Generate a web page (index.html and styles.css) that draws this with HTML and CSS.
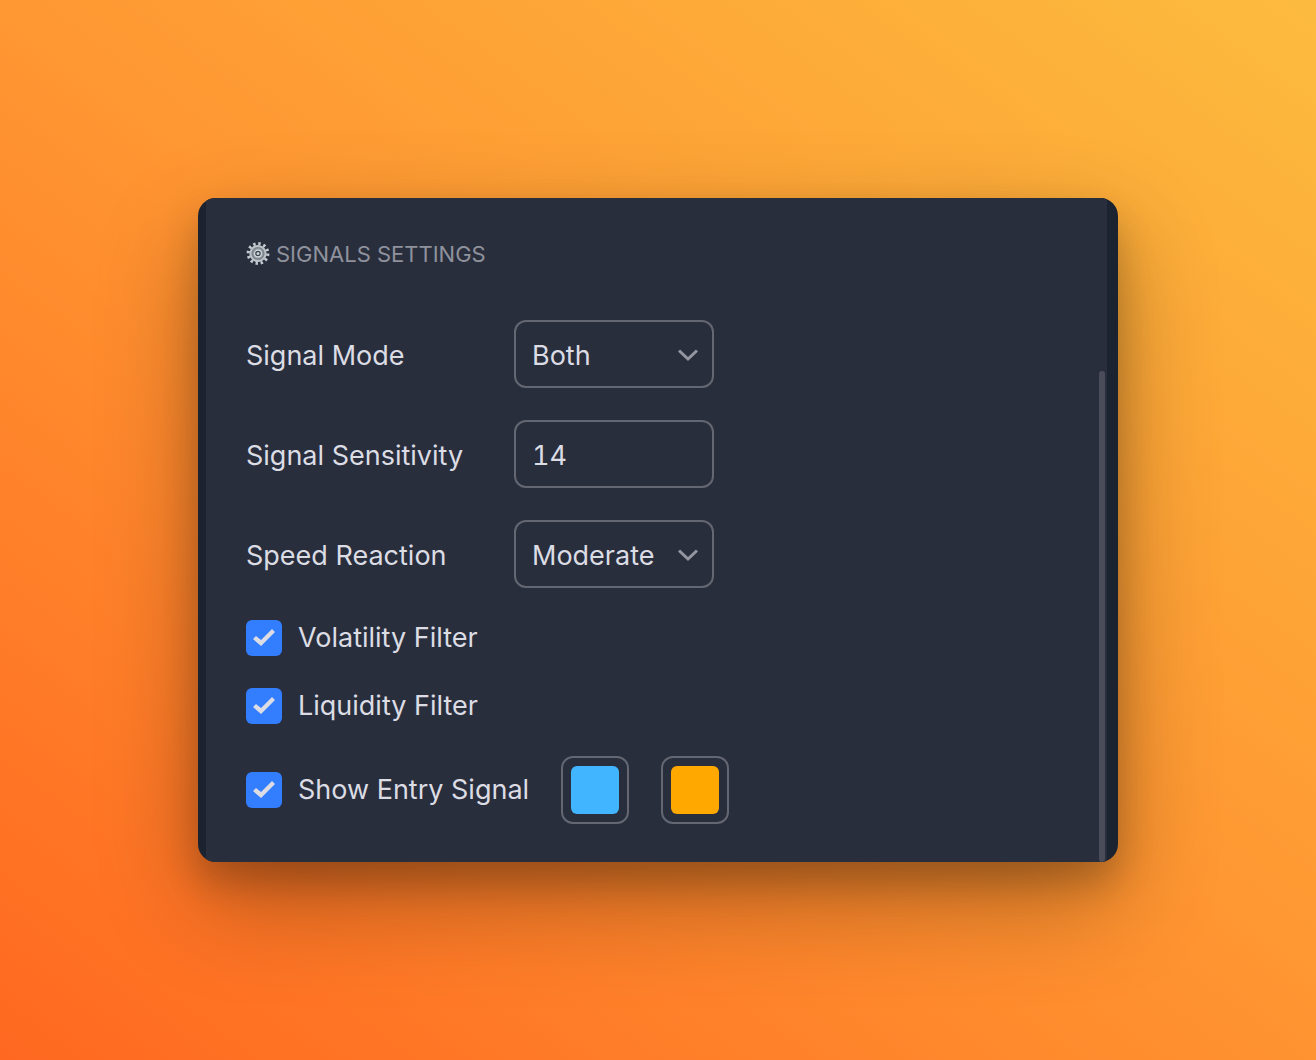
FILE: index.html
```html
<!DOCTYPE html>
<html lang="en">
    <head>
        <meta charset="utf-8">
        <title>Signals Settings</title>
        <link rel="stylesheet" href="styles.css">
    </head>
    <body>
        <div class="window">
            <form class="settings">
                <h1 class="heading">
                    <svg class="gear" viewBox="0 0 24 24" aria-hidden="true">
                        <circle cx="12" cy="11.5" r="9.8" fill="none" stroke="#c3cbd0" stroke-width="3.2" stroke-dasharray="2.4 2.731"/>
                        <circle cx="12" cy="11.5" r="7.6" fill="#8d969d" stroke="#bcc4c9" stroke-width="2"/>
                        <circle cx="12" cy="11.5" r="5.6" fill="#98a1a7" stroke="#7c868e" stroke-width="1.4"/>
                        <circle cx="12" cy="11.5" r="3.4" fill="#3c4651" stroke="#d3d9dc" stroke-width="1.2"/>
                        <circle cx="12" cy="11.5" r="1.5" fill="#c9d0d4"/>
                    </svg>
                    SIGNALS SETTINGS
                </h1>
                <div class="row">
                    <label class="name" for="mode">Signal Mode</label>
                    <div class="select">
                        <select class="field" id="mode">
                            <option>Both</option>
                            <option>Long</option>
                            <option>Short</option>
                        </select>
                        <svg class="arrow" viewBox="0 0 22 14" aria-hidden="true"><path d="M2 2.5l9 8.5 9-8.5"/></svg>
                    </div>
                </div>
                <div class="row">
                    <label class="name" for="sensitivity">Signal Sensitivity</label>
                    <input class="field" id="sensitivity" type="text" inputmode="numeric" value="14">
                </div>
                <div class="row">
                    <label class="name" for="speed">Speed Reaction</label>
                    <div class="select">
                        <select class="field" id="speed">
                            <option>Moderate</option>
                            <option>Slow</option>
                            <option>Fast</option>
                        </select>
                        <svg class="arrow" viewBox="0 0 22 14" aria-hidden="true"><path d="M2 2.5l9 8.5 9-8.5"/></svg>
                    </div>
                </div>
                <div class="row">
                    <label class="check"><input class="box" type="checkbox" checked>Volatility Filter</label>
                </div>
                <div class="row">
                    <label class="check"><input class="box" type="checkbox" checked>Liquidity Filter</label>
                </div>
                <div class="row colors">
                    <label class="check"><input class="box" type="checkbox" checked>Show Entry Signal</label>
                    <input class="color" type="color" value="#41b5ff" aria-label="Long color">
                    <input class="color" type="color" value="#ffa800" aria-label="Short color">
                </div>
            </form>
            <div class="track"><div class="thumb"></div></div>
        </div>
    </body>
</html>
```

FILE: styles.css
```css
*{
    box-sizing: border-box;
}
body{
    margin: 0;
    min-height: 100vh;
    padding: 198px;
    background: linear-gradient(36deg, #ff6820, #ff9732 52%, #fcbb3e);
    font-family: Inter, "Liberation Sans", sans-serif;
    font-size: 27px;
    color: #dbdce4;
}
.window{
    display: flex;
    overflow: hidden;
    padding: 0 11px 0 8px;
    border-radius: 18px;
    background: #1b2230;
    box-shadow: 0 40px 100px rgba(0,0,0,.3), 0 20px 36px rgba(0,0,0,.2);
}
.settings{
    flex: 1;
    display: flex;
    flex-direction: column;
    gap: 32px;
    padding: 40px 40px 38px;
    background: #292e3c;
}
.heading{
    display: flex;
    align-items: center;
    gap: 6px;
    margin: 0 0 18px;
    font-size: 22px;
    font-weight: 400;
    line-height: 32px;
    color: #8f929c;
}
.gear{
    width: 24px;
    height: 24px;
}
.row{
    display: flex;
    align-items: center;
}
.name{
    width: 268px;
    padding-top: 2px;
}
.select{
    position: relative;
}
.field{
    display: block;
    appearance: none;
    width: 200px;
    height: 68px;
    margin: 0;
    padding: 2px 16px 0;
    border: 2px solid #646772;
    border-radius: 12px;
    background: transparent;
    font: inherit;
    font-variant-numeric: tabular-nums;
    color: inherit;
}
.arrow{
    position: absolute;
    top: 28px;
    right: 15px;
    width: 22px;
    height: 14px;
    fill: none;
    stroke: #9497a0;
    stroke-width: 3;
    pointer-events: none;
}
.check{
    display: flex;
    align-items: center;
    gap: 16px;
    line-height: 36px;
}
.box{
    appearance: none;
    width: 36px;
    height: 36px;
    margin: 0;
    border-radius: 6px;
    background: #337dff;
}
.box:checked::before{
    content: "";
    display: block;
    width: 36px;
    height: 36px;
    background: #dbdce4;
    clip-path: polygon(7px 19px, 10px 16px, 15px 20px, 26px 9px, 29px 12px, 15px 26px);
}
.colors{
    gap: 32px;
}
.color{
    appearance: none;
    width: 68px;
    height: 68px;
    padding: 8px;
    border: 2px solid #646772;
    border-radius: 12px;
    background: transparent;
}
.color::-webkit-color-swatch-wrapper{
    padding: 0;
}
.color::-webkit-color-swatch{
    border: none;
    border-radius: 6px;
}
.track{
    width: 8px;
    padding: 173px 2px 0 0;
    background: #292e3c;
}
.thumb{
    height: 100%;
    border-radius: 3px;
    background: #4a4d59;
}
```
